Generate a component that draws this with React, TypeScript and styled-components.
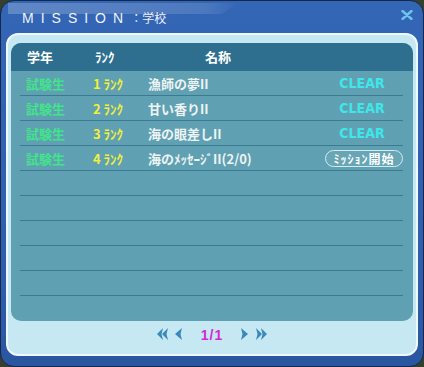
import React from "react";
import styled, { createGlobalStyle } from "styled-components";

type Mission = {
  grade: string;
  rank: number;
  name: string;
  cleared: boolean;
};

const missions: Mission[] = [
  { grade: "試験生", rank: 1, name: "漁師の夢II", cleared: true },
  { grade: "試験生", rank: 2, name: "甘い香りII", cleared: true },
  { grade: "試験生", rank: 3, name: "海の眼差しII", cleared: true },
  { grade: "試験生", rank: 4, name: "海のﾒｯｾｰｼﾞII(2/0)", cleared: false },
];

const ROW_COUNT = 10;

const GlobalStyle = createGlobalStyle`
  html, body {
    margin: 0;
    padding: 0;
    background: #34402c;
  }
  body {
    font-family: "Noto Sans CJK JP", "Noto Sans", sans-serif;
  }
`;

export default function App() {
  const rows = Array.from({ length: ROW_COUNT }, (_, i) => missions[i]);

  return (
    <>
      <GlobalStyle />
      <Window>
        <Gloss />
        <TitleBar>
          <Title>
            <TitleMain>MISSION</TitleMain>
            <TitleSub>：学校</TitleSub>
          </Title>
          <CloseButton aria-label="close">
            <svg width="12" height="10" viewBox="0 0 12 10">
              <path d="M1.5 1 L10.5 9 M10.5 1 L1.5 9" stroke="#6cc3ec" strokeWidth="2.4" strokeLinecap="round" />
            </svg>
          </CloseButton>
        </TitleBar>

        <LightPanel>
          <Table>
            <HeaderRow>
              <HeadCell $indent={1}>学年</HeadCell>
              <HeadCell $indent={2}>ﾗﾝｸ</HeadCell>
              <HeadCell $indent={57}>名称</HeadCell>
              <HeadCell />
            </HeaderRow>
            {rows.map((m, i) => (
              <Row key={i}>
                {m && (
                  <>
                    <Grade>{m.grade}</Grade>
                    <Rank>{m.rank} ﾗﾝｸ</Rank>
                    <Name>{m.name}</Name>
                    <Status>
                      {m.cleared ? <Clear>CLEAR</Clear> : <StartButton>ﾐｯｼｮﾝ開始</StartButton>}
                    </Status>
                  </>
                )}
              </Row>
            ))}
          </Table>

          <Pager>
            <NavIcon $gap={7}>
              <svg width="11" height="12" viewBox="0 0 11 12">
                <polygon points="6,0 0,6 6,12 4.5,6" />
                <polygon points="11,0 5,6 11,12 9.5,6" />
              </svg>
            </NavIcon>
            <NavIcon $gap={19}>
              <svg width="7" height="12" viewBox="0 0 7 12">
                <polygon points="7,0 0,6 7,12 5.5,6" />
              </svg>
            </NavIcon>
            <PageNum>1/1</PageNum>
            <NavIcon $gap={8} $lead={18}>
              <svg width="7" height="12" viewBox="0 0 7 12">
                <polygon points="0,0 7,6 0,12 1.5,6" />
              </svg>
            </NavIcon>
            <NavIcon>
              <svg width="11" height="12" viewBox="0 0 11 12">
                <polygon points="0,0 6,6 0,12 1.5,6" />
                <polygon points="5,0 11,6 5,12 6.5,6" />
              </svg>
            </NavIcon>
          </Pager>
        </LightPanel>
      </Window>
    </>
  );
}

const Window = styled.div`
  position: relative;
  width: 424px;
  height: 367px;
  box-sizing: border-box;
  border: 1px solid #16284a;
  border-radius: 14px;
  background: linear-gradient(#3466b6, #2f5dab 80%, #2a55a0);
  padding: 0 5px 10px;
  display: flex;
  flex-direction: column;
  overflow: hidden;
`;

const Gloss = styled.div`
  position: absolute;
  top: 2px;
  left: 7px;
  width: 232px;
  height: 11px;
  background: linear-gradient(to right, rgba(255, 255, 255, 0.22), rgba(255, 255, 255, 0.12) 85%, rgba(255, 255, 255, 0));
  clip-path: polygon(0 0, 100% 0, 92% 100%, 0 100%);
  pointer-events: none;
`;

const TitleBar = styled.div`
  height: 32px;
  display: flex;
  align-items: center;
  justify-content: space-between;
  padding: 0 5px 0 16px;
`;

const Title = styled.div`
  display: flex;
  align-items: center;
  color: #eef2fa;
  margin-top: 1px;
`;

const TitleMain = styled.span`
  font-family: "Liberation Sans", sans-serif;
  font-size: 14px;
  letter-spacing: 7px;
`;

const TitleSub = styled.span`
  font-family: "Noto Sans CJK JP", sans-serif;
  font-size: 12px;
`;

const CloseButton = styled.div`
  width: 12px;
  height: 10px;
  display: flex;
  margin-top: -4px;
`;

const LightPanel = styled.div`
  flex: 1;
  border: 2px solid #eef9fd;
  border-radius: 12px;
  background: #c5e8f3;
  padding: 8px 3px 0;
  display: flex;
  flex-direction: column;
`;

const Table = styled.div`
  height: 278px;
  flex-shrink: 0;
  border-radius: 10px;
  background: #5fa1b2;
  overflow: hidden;
`;

const grid = `
  display: grid;
  grid-template-columns: 67px 55px 1fr 80px;
  align-items: center;
  margin: 0 10px 0 9px;
  padding-left: 6px;
  font-size: 13px;
  font-weight: 700;
`;

const HeaderRow = styled.div`
  ${grid}
  height: 28px;
  margin: 0;
  padding: 0 10px 0 15px;
  background: #2e6f8f;
  color: #ffffff;
`;

const HeadCell = styled.div<{ $indent?: number }>`
  padding-left: ${(p) => p.$indent ?? 0}px;
  line-height: 28px;
`;

const Row = styled.div`
  ${grid}
  height: 25px;
  box-sizing: border-box;
  border-bottom: 1px solid #3a7b90;

  &:last-child {
    border-bottom: none;
  }
`;

const Grade = styled.div`
  color: #42e48a;
`;

const Rank = styled.div`
  color: #f2ee3c;
`;

const Name = styled.div`
  color: #eef3f3;
  white-space: nowrap;
`;

const Status = styled.div`
  display: flex;
  justify-content: center;
`;

const Clear = styled.span`
  font-family: "DejaVu Sans Condensed", "DejaVu Sans", sans-serif;
  font-stretch: condensed;
  font-size: 14px;
  font-weight: 700;
  color: #3fe6ea;
  margin-left: -2px;
`;

const StartButton = styled.div`
  width: 79px;
  height: 17px;
  box-sizing: border-box;
  border: 1px solid #d2ecf2;
  border-radius: 9px;
  background: rgba(255, 255, 255, 0.06);
  color: #ffffff;
  font-size: 12px;
  font-weight: 700;
  letter-spacing: 1px;
  display: flex;
  align-items: center;
  justify-content: center;
  margin-left: 2px;
`;

const Pager = styled.div`
  flex: 1;
  display: flex;
  justify-content: center;
  align-items: flex-start;
  padding-top: 7px;
`;

const NavIcon = styled.div<{ $gap?: number; $lead?: number }>`
  display: flex;
  margin-left: ${(p) => p.$lead ?? 0}px;
  margin-right: ${(p) => p.$gap ?? 0}px;
  fill: #3a88ba;
`;

const PageNum = styled.div`
  font-family: "Liberation Sans", Arial, sans-serif;
  font-size: 14px;
  font-weight: 700;
  letter-spacing: 1px;
  color: #d22ad6;
  line-height: 12px;
  margin-top: 1px;
`;
